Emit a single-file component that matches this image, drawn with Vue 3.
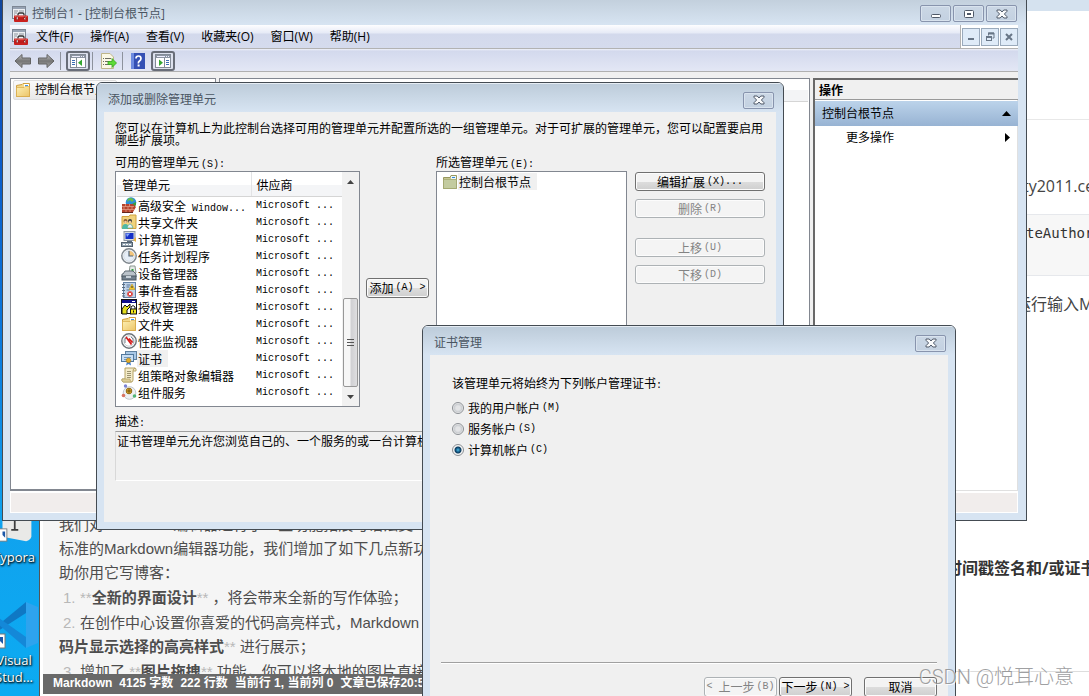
<script setup>
import { ref } from 'vue'

const menus = [
  ['文件', 'F'], ['操作', 'A'], ['查看', 'V'], ['收藏夹', 'O'], ['窗口', 'W'], ['帮助', 'H'],
]

const snapins = [
  { icon: 'firewall', name: '高级安全', latin: ' Window...' },
  { icon: 'share', name: '共享文件夹' },
  { icon: 'computer', name: '计算机管理' },
  { icon: 'clock', name: '任务计划程序' },
  { icon: 'device', name: '设备管理器' },
  { icon: 'events', name: '事件查看器' },
  { icon: 'auth', name: '授权管理器' },
  { icon: 'folder', name: '文件夹' },
  { icon: 'perf', name: '性能监视器' },
  { icon: 'cert', name: '证书', selected: true },
  { icon: 'policy', name: '组策略对象编辑器' },
  { icon: 'component', name: '组件服务' },
]

const accounts = [
  { id: 'user', label: '我的用户帐户', key: '(M)' },
  { id: 'service', label: '服务帐户', key: '(S)' },
  { id: 'computer', label: '计算机帐户', key: '(C)' },
]
const account = ref('computer')
</script>

<template>
  <div class="desktop">
    <svg class="defs" aria-hidden="true">
      <linearGradient id="gFolder" x1="0" y1="0" x2="1" y2="1">
        <stop offset="0" stop-color="#fdf0b4" /><stop offset="1" stop-color="#ecc467" />
      </linearGradient>
      <linearGradient id="gArrow" x1="0" y1="0" x2="0" y2="1">
        <stop offset="0" stop-color="#c4c4c4" /><stop offset="0.5" stop-color="#757575" /><stop offset="1" stop-color="#a8a8a8" />
      </linearGradient>
      <symbol id="mmc" viewBox="0 0 16 16">
        <rect x="0.500" y="0.500" width="13" height="12" fill="#eceff3" stroke="#7d8794" />
        <rect x="1" y="1" width="12" height="2" fill="#97a3b3" />
        <path d="M2 5h4M2 7h3M2 9h1M7 5h5" stroke="#8d949d" />
        <path d="M6 9.500V8.500Q6 7 7.500 7h3Q12 7 12 8.500V9.500" fill="none" stroke="#333" stroke-width="1.300" />
        <rect x="2" y="9.500" width="14" height="6.500" rx="1" fill="#c9211e" />
        <path d="M3 10.500h12" stroke="#e0524a" />
        <path d="M2 13h14" stroke="#a31412" stroke-width="0.6" />
        <rect x="4.500" y="11" width="1.500" height="2.500" fill="#efefef" stroke="#6f1010" stroke-width="0.4" />
        <rect x="12" y="11" width="1.500" height="2.500" fill="#efefef" stroke="#6f1010" stroke-width="0.4" />
      </symbol>
      <symbol id="folder" viewBox="0 0 16 16">
        <path d="M1.500 3.500L7 2.500L8 1.500H14.500V14.500H1.500Z" fill="#f3d98b" stroke="#cf9f3f" />
        <rect x="9" y="2" width="5" height="3" fill="#fff" />
        <path d="M10 3.500h3" stroke="#3d96e8" />
        <path d="M1.500 5.500H9L10 4.500H14.500V14.500H1.500Z" fill="url(#gFolder)" stroke="#d9aa49" stroke-width="0.7" />
      </symbol>
      <symbol id="folder-green" viewBox="0 0 16 16">
        <path d="M1.500 3.500H8L9 1.500H14.500V14.500H1.500Z" fill="#c6c792" stroke="#97975f" />
        <rect x="9" y="2" width="5" height="3" fill="#edf4f4" />
        <path d="M10 3.500h3" stroke="#2e8bd8" />
        <path d="M1.500 5.500H14.500V14.500H1.500Z" fill="#c3cba0" stroke="#a1a66f" stroke-width="0.7" />
      </symbol>
      <symbol id="firewall" viewBox="0 0 16 16">
        <circle cx="10" cy="5.500" r="5.300" fill="#2f8fd6" />
        <path d="M7 1.500Q11 0 13 3L11 5L9 3L6 5Z" fill="#69bf4a" />
        <path d="M11 7l4-2v3l-2 2z" fill="#3c9d3a" />
        <path d="M1 7H12L15 10L12 15H1Z" fill="#b5442d" />
        <path d="M1 9.500H13M1 12.500H13M4.500 7v2.500M8.500 7v2.500M3 9.500v3M7 9.500v3M11 9.500v3M5 12.500V15M9 12.500V15" stroke="#e7a48e" stroke-width="0.7" />
        <path d="M1 15.500H12" stroke="#66261b" />
      </symbol>
      <symbol id="share" viewBox="0 0 16 16">
        <path d="M1 2.500H8L9 1H15V14.500H1Z" fill="#f0d27c" stroke="#d1a33e" />
        <circle cx="4.500" cy="7" r="2" fill="#8a5a2e" /><circle cx="9" cy="7" r="2" fill="#3b3b3b" />
        <circle cx="4.500" cy="8" r="1.300" fill="#f0c8a0" /><circle cx="9" cy="8" r="1.300" fill="#f0c8a0" />
        <path d="M1 15Q1 10 4.500 10T7 15Z" fill="#4fb8a5" /><path d="M6 14Q7 10 9 10T12 14Z" fill="#e8f3f7" stroke="#3b9b8a" stroke-width="0.6" />
      </symbol>
      <symbol id="computer" viewBox="0 0 16 16">
        <rect x="3" y="0.500" width="11" height="9" fill="#d7dde2" stroke="#8e98a4" />
        <rect x="4.500" y="2" width="8" height="6" fill="#1531c8" />
        <path d="M5 2.500L9 2.500L6 6Z" fill="#87a7f5" />
        <path d="M12 9L15 6v5Z" fill="#e8b449" />
        <path d="M6 10h5v2H6Z" fill="#5d6f80" />
        <rect x="0.500" y="11.500" width="11" height="4" fill="#94a4b2" stroke="#53616e" />
        <path d="M2 13.500h2M5 13.500h2M8 13.500h2" stroke="#fff" />
      </symbol>
      <symbol id="clock" viewBox="0 0 16 16">
        <circle cx="8" cy="8" r="7.200" fill="#f3f6f8" stroke="#7d858c" stroke-width="1.400" />
        <circle cx="8" cy="8" r="5.300" fill="#e6eef7" stroke="#c2ccd6" stroke-width="0.6" />
        <path d="M8 8V2.700A5.300 5.300 0 0 1 13.300 8Z" fill="#f2c57b" />
        <path d="M8 3v5h4" fill="none" stroke="#52667b" stroke-width="1.200" />
      </symbol>
      <symbol id="device" viewBox="0 0 16 16">
        <path d="M9 1h5l1 7H8Z" fill="#e4eae6" stroke="#8b9690" />
        <path d="M10.500 4h2v3h-2z" fill="#37a345" />
        <path d="M2 9L4 6H12L15 9V12H1V9Z" fill="#bbc3ca" stroke="#5f6a74" />
        <rect x="1" y="11" width="14" height="4" fill="#72808d" stroke="#4d5862" />
        <rect x="5" y="11" width="5" height="2" fill="#c8d1d9" />
      </symbol>
      <symbol id="events" viewBox="0 0 16 16">
        <rect x="2.500" y="0.500" width="12" height="15" fill="#c2d4e8" stroke="#6583a6" />
        <path d="M1 2.500h3M1 5.500h3M1 8.500h3M1 11.500h3M1 14h3" stroke="#5c6c7d" />
        <path d="M5.500 3h4M5.500 5h3M5.500 8h3" stroke="#54749c" />
        <path d="M11 2l3 5.500H8Z" fill="#f5c927" stroke="#b28b16" stroke-width="0.5" />
        <path d="M11 4v2" stroke="#333" />
        <circle cx="9" cy="12" r="2.800" fill="#dd403b" /><path d="M7.800 10.800l2.400 2.400M10.200 10.800l-2.400 2.400" stroke="#fff" />
      </symbol>
      <symbol id="auth" viewBox="0 0 16 16">
        <rect x="0.500" y="0.500" width="15" height="14" fill="#fff" stroke="#111" />
        <rect x="1" y="1" width="14" height="3" fill="#10108c" />
        <path d="M11 2.500h3" stroke="#fff" />
        <path d="M1 15V10L4 6L6 8L9 5V8L6 11V15Z" fill="#e2dd1d" stroke="#111" />
        <path d="M10 10V8q2-3 4 0v2" fill="none" stroke="#111" />
        <rect x="9.500" y="10" width="6" height="5" fill="#f2e81e" stroke="#111" />
        <path d="M12.500 11.500v2" stroke="#111" />
      </symbol>
      <symbol id="perf" viewBox="0 0 16 16">
        <circle cx="8" cy="8" r="7.200" fill="#fff" stroke="#6c7379" stroke-width="1.400" />
        <circle cx="8" cy="8" r="5.200" fill="none" stroke="#c5cacf" />
        <path d="M4 10V6l2-2M10 4l2 2v4" stroke="#79838d" fill="none" />
        <path d="M5 4L10.500 11.500M8 5.500L11.500 9.500" stroke="#d61e1e" stroke-width="1.700" />
      </symbol>
      <symbol id="cert" viewBox="0 0 16 16">
        <rect x="4.500" y="1.500" width="11" height="8" fill="#a9c8e6" stroke="#60819f" />
        <rect x="0.500" y="4.500" width="12" height="7" fill="#c9def3" stroke="#52799e" />
        <path d="M3 7.500h7M3 9.500h3" stroke="#6f97bc" />
        <path d="M6.500 10L5 15.500l2.500-1.500L10 15.500L9 10Z" fill="#3e7ed1" />
        <circle cx="7.500" cy="10.500" r="2.300" fill="#e3ad29" stroke="#a67714" stroke-width="0.6" />
      </symbol>
      <symbol id="policy" viewBox="0 0 16 16">
        <path d="M4 1H14Q15.500 1 15 4H12V13Q12 15 10 15H2Q0.500 14 1 12H4Z" fill="#f3ebc9" stroke="#b6a366" />
        <path d="M12 4Q12 1.500 14 1" fill="none" stroke="#b6a366" />
        <path d="M6 4.500h4M6 6.500h4M6 8.500h4M6 10.500h4" stroke="#9c9370" />
        <path d="M1 12H9Q9 14.500 10.500 15H2Q0.500 14 1 12Z" fill="#dccd97" stroke="#b6a366" stroke-width="0.7" />
      </symbol>
      <symbol id="component" viewBox="0 0 16 16">
        <circle cx="8.500" cy="9" r="6.300" fill="#eef0f2" stroke="#c2c7cc" />
        <circle cx="8" cy="7" r="2.800" fill="#efb92e" stroke="#8c6514" />
        <path d="M8 5v4M6 7h4" stroke="#6b4b0e" />
        <circle cx="4.500" cy="2" r="1.700" fill="#7b83d5" /><circle cx="2.500" cy="11.500" r="1.800" fill="#d97362" />
        <circle cx="13.500" cy="12" r="1.800" fill="#52b576" />
      </symbol>
      <symbol id="close" viewBox="0 0 12 10">
        <path d="M1 1H4.200L6 3L7.800 1H11V2.300L8.400 5L11 7.700V9H7.800L6 7L4.200 9H1V7.700L3.600 5L1 2.300Z" fill="#fafbfc" stroke="#4f5968" />
      </symbol>
    </svg>

    <!-- web page on the right -->
    <section class="article">
      <p class="a1">ty2011.cer</p>
      <pre class="acode">teAuthority</pre>
      <p class="a3">运行输入MMC</p>
      <h4 class="a4">时间戳签名和/或证书</h4>
    </section>

    <!-- desktop shortcuts -->
    <aside class="icons">
      <svg class="typora" viewBox="0 0 40 32">
        <path d="M0 0H33V18Q32 22 27 23L0 18Z" fill="#e9e9e7" />
        <path d="M10 10h8M14 0v10" stroke="#3d3d3d" stroke-width="2" />
        <rect x="-8" y="9" width="13" height="14" fill="#fff" stroke="#777" />
        <path d="M0 12h3v7L0 16z" fill="#1c58a8" />
      </svg>
      <span class="cap">Typora</span>
      <svg class="code" viewBox="0 0 40 52">
        <path d="M26 3L38 8V44L26 49Z" fill="#2ea3ee" />
        <path d="M26 3L-8 31V36L26 14Z" fill="#0f78c4" />
        <path d="M26 49L-8 20V14L26 38Z" fill="#1488d8" />
        <rect x="-8" y="35" width="13" height="14" fill="#fff" stroke="#777" />
        <path d="M0 38h3v7L0 42z" fill="#1c58a8" />
      </svg>
      <span class="cap">Visual</span>
      <span class="cap">Stud...</span>
    </aside>

    <!-- markdown editor behind the console -->
    <section class="editor">
      <div class="prose">
        <p>我们对Markdown编辑器进行了一些功能拓展与语法支<br>标准的Markdown编辑器功能，我们增加了如下几点新功<br>助你用它写博客：</p>
        <p><i class="num">1.</i><i>**</i><b>全新的界面设计</b><i>**</i> ，将会带来全新的写作体验；</p>
        <p><i class="num">2.</i>在创作中心设置你喜爱的代码高亮样式，Markdown<br><b>码片显示选择的高亮样式</b><i>**</i> 进行展示；</p>
        <p><i class="num">3.</i>增加了 <i>**</i><b>图片拖拽</b><i>**</i> 功能，你可以将本地的图片直接</p>
      </div>
      <footer class="edbar"><span>Markdown</span><span>4125 字数</span><span>222 行数</span><span>当前行 1, 当前列 0</span><span>文章已保存20:5</span></footer>
    </section>

    <!-- console window -->
    <main class="win console">
      <header class="ctitle">
        <svg class="i16"><use href="#mmc" /></svg>
        <h1>控制台1 - [控制台根节点]</h1>
        <div class="cbtns">
          <button class="cb" aria-label="最小化"><svg width="12" height="10" viewBox="0 0 12 10"><rect x="1.500" y="5.500" width="9" height="3" rx="1" fill="#fff" stroke="#4f5968" /></svg></button>
          <button class="cb" aria-label="最大化"><svg width="12" height="10" viewBox="0 0 12 10"><rect x="1.500" y="1.500" width="9" height="7" rx="1" fill="#fff" stroke="#4f5968" /><rect x="4.500" y="4.500" width="3" height="1" fill="#fff" stroke="#4f5968" /></svg></button>
          <button class="cb" aria-label="关闭"><svg width="12" height="10"><use href="#close" /></svg></button>
        </div>
      </header>
      <nav class="menubar">
        <div class="menus">
          <svg class="i16"><use href="#mmc" /></svg>
          <button v-for="m in menus" :key="m[1]" class="menu">{{ m[0] }}({{ m[1] }})</button>
        </div>
        <div class="mdi">
          <button aria-label="最小化子窗口"><svg width="10" height="10"><path d="M2 7h6" stroke="#687687" stroke-width="2" /></svg></button>
          <button aria-label="还原子窗口"><svg width="10" height="10"><path d="M3.500 3.500V1H9V6H7.500" fill="none" stroke="#687687" /><path d="M3 1.500H9" stroke="#687687" stroke-width="2" /><rect x="1.500" y="4.500" width="5" height="4" fill="none" stroke="#687687" /><path d="M1 5h6" stroke="#687687" stroke-width="2" /></svg></button>
          <button aria-label="关闭子窗口"><svg width="10" height="10"><path d="M2 2L8 8M8 2L2 8" stroke="#687687" stroke-width="2" /></svg></button>
        </div>
      </nav>
      <div class="toolbar">
        <button class="tb" aria-label="后退"><svg width="18" height="16" viewBox="0 0 18 16"><path d="M1 8L8 1.500V5H16.500V11H8V14.500Z" fill="url(#gArrow)" stroke="#626262" /></svg></button>
        <button class="tb fwd" aria-label="前进"><svg width="18" height="16" viewBox="0 0 18 16"><path d="M17 8L10 1.500V5H1.500V11H10V14.500Z" fill="url(#gArrow)" stroke="#626262" /></svg></button>
        <span class="sep"></span>
        <button class="tb on" aria-label="显示/隐藏控制台树">
          <svg width="16" height="14" viewBox="0 0 16 14"><rect x="0.500" y="0.500" width="15" height="13" fill="#fff" stroke="#838b97" /><rect x="1" y="1" width="14" height="3" fill="#8c95a2" /><path d="M2 2.500h8M11 2.500h1M13 2.500h1" stroke="#eef" /><path d="M2 6.500h3M2 8.500h3M2 10.500h3" stroke="#3c6eb5" /><path d="M6.500 4v9" stroke="#838b97" /><path d="M12 5.500V12L8 8.800Z" fill="#35a832" /></svg>
        </button>
        <span class="sep s2"></span>
        <button class="tb exp" aria-label="导出列表">
          <svg width="16" height="16" viewBox="0 0 16 16"><path d="M0.500 0.500H9L12.500 4V15.500H0.500Z" fill="#fbf8e6" stroke="#bfb68b" /><path d="M2 5.500h1M4 5.500h6M2 8.500h1M4 8.500h5M2 11.500h1M4 11.500h5" stroke="#6d6d62" /><path d="M7 8.500h4V5.500L15.500 10L11 14.500V11.500H7Z" fill="#5edb37" stroke="#36a220" stroke-width="0.8" /></svg>
        </button>
        <span class="sep"></span>
        <button class="tb help" aria-label="帮助"><svg width="14" height="16" viewBox="0 0 14 16"><rect width="14" height="16" fill="#3450b4" /><rect width="3" height="16" fill="#6d8be0" /><path d="M5 5.500Q5 3 7.500 3T10 5.500Q10 7 8.500 8T7.500 10.500" fill="none" stroke="#fff" stroke-width="1.700" /><rect x="6.600" y="11.500" width="2" height="2" fill="#fff" /></svg></button>
        <button class="tb on" aria-label="显示/隐藏操作窗格">
          <svg width="16" height="14" viewBox="0 0 16 14"><rect x="0.500" y="0.500" width="15" height="13" fill="#fff" stroke="#838b97" /><rect x="1" y="1" width="14" height="3" fill="#8c95a2" /><path d="M2 2.500h8M11 2.500h1M13 2.500h1" stroke="#eef" /><path d="M11 6.500h3M11 8.500h3M11 10.500h3" stroke="#3c6eb5" /><path d="M9.500 4v9" stroke="#838b97" /><path d="M4 5.500V12L8 8.800Z" fill="#35a832" /></svg>
        </button>
      </div>
      <div class="panes">
        <section class="pane tree"><div class="node"><svg class="i16"><use href="#folder" /></svg>控制台根节点</div></section>
        <section class="pane mid"><div class="midhead"></div></section>
        <section class="actions">
          <h2>操作</h2>
          <button class="acthead">控制台根节点<svg width="9" height="5"><path d="M0 5L4.500 0L9 5Z" /></svg></button>
          <button class="actrow">更多操作<svg width="5" height="9"><path d="M0 0L5 4.500L0 9Z" /></svg></button>
        </section>
      </div>
      <footer class="cstatus"></footer>
    </main>

    <!-- snap-in dialog -->
    <section class="win dialog addrem">
      <header class="dtitle"><h2>添加或删除管理单元</h2><button class="cb" aria-label="关闭"><svg width="12" height="10"><use href="#close" /></svg></button></header>
      <div class="dbody sim">
        <p class="intro">您可以在计算机上为此控制台选择可用的管理单元并配置所选的一组管理单元。对于可扩展的管理单元，您可以配置要启用<br>哪些扩展项。</p>
        <div class="cols">
          <div class="avail">
            <h3>可用的管理单元<span class="en">(S):</span></h3>
            <div class="list">
              <table>
                <thead><tr><th class="c1">管理单元</th><th>供应商</th></tr></thead>
                <tbody>
                  <tr v-for="s in snapins" :key="s.icon">
                    <td><div class="cell"><svg class="i16"><use :href="'#' + s.icon" /></svg><span :class="['nm', { sel: s.selected }]">{{ s.name }}<span v-if="s.latin" class="en pre">{{ s.latin }}</span></span></div></td>
                    <td><span class="en vendor">Microsoft ...</span></td>
                  </tr>
                </tbody>
              </table>
              <div class="scroll">
                <svg width="7" height="4"><path d="M0 4L3.500 0L7 4Z" fill="#444" /></svg>
                <div class="thumb"><i></i><i></i><i></i></div>
                <svg width="7" height="4"><path d="M0 0L3.500 4L7 0Z" fill="#444" /></svg>
              </div>
            </div>
          </div>
          <div class="addcol"><button class="btn add">添加<span class="en">(A) &gt;</span></button></div>
          <div class="chosen">
            <h3>所选管理单元<span class="en">(E):</span></h3>
            <div class="list tall"><div class="root"><svg class="i16"><use href="#folder-green" /></svg><span class="nm sel">控制台根节点</span></div></div>
          </div>
          <div class="side">
            <button class="btn">编辑扩展<span class="en">(X)...</span></button>
            <button class="btn" disabled>删除<span class="en">(R)</span></button>
            <button class="btn gap" disabled>上移<span class="en">(U)</span></button>
            <button class="btn" disabled>下移<span class="en">(D)</span></button>
          </div>
        </div>
        <h3 class="dl">描述<span class="en colon">:</span></h3>
        <div class="desc">证书管理单元允许您浏览自己的、一个服务的或一台计算机</div>
      </div>
    </section>

    <!-- certificate wizard -->
    <section class="win dialog cert">
      <header class="dtitle"><h2>证书管理</h2><button class="cb" aria-label="关闭"><svg width="12" height="10"><use href="#close" /></svg></button></header>
      <div class="dbody wiz sim">
        <fieldset>
          <legend>该管理单元将始终为下列帐户管理证书<span class="en colon">:</span></legend>
          <label v-for="a in accounts" :key="a.id"><input v-model="account" type="radio" name="account" :value="a.id">{{ a.label }}<span class="en">{{ a.key }}</span></label>
        </fieldset>
        <footer>
          <button class="btn" disabled><span class="en pre">&lt; </span>上一步<span class="en">(B)</span></button>
          <button class="btn">下一步<span class="en">(N) &gt;</span></button>
          <button class="btn cancel">取消</button>
        </footer>
      </div>
    </section>

    <div class="mark">CSDN @悦耳心意</div>
  </div>
</template>

<style>
body { margin: 0; background: #fff; }
</style>

<style scoped>
.desktop { position: relative; height: 100vh; overflow: hidden; background: #fff; font: 12px/16px "Open Sans", "Noto Sans CJK SC", sans-serif; color: #000; }
.desktop * { box-sizing: border-box; }
.defs { position: absolute; width: 0; height: 0; }
h1, h2, h3, h4, p, pre { margin: 0; font-size: inherit; font-weight: normal; }
button { font: inherit; color: inherit; margin: 0; padding: 0; border: 0; background: none; }
i { font-style: normal; }
.i16 { width: 16px; height: 16px; flex: none; }
svg { display: block; flex: none; }

.article { position: absolute; top: 0; right: 0; bottom: 0; left: 900px; border-top: 11px solid #d5e2ef; color: #444; font-size: 16px; line-height: 24px; white-space: nowrap; overflow: hidden; padding-top: 108px; }
.a1 { border-top: 1px solid #e8e8e8; padding: 54px 0 0 123px; height: 95px; }
.acode { background: #f7f7f7; border: 1px solid #e6e8ec; border-width: 1px 0; height: 62px; padding: 6px 0 0 126px; font: 14px/24px "DejaVu Sans Mono", monospace; color: #333; }
.a3 { padding: 16px 0 0 115px; height: 264px; }
.a4 { padding: 16px 0 0 46px; height: 132px; font-weight: bold; color: #333; border-bottom: 1px solid #ddd; }

.icons { position: absolute; left: 0; top: 0; bottom: 0; width: 40px; padding-top: 521px; background: linear-gradient(#10469b 0, #0b57c6 130px, #0b78dd 330px, #10a2ee 520px, #0cabf2 100%); color: #fff; font-size: 13px; line-height: 17px; overflow: hidden; display: flex; flex-direction: column; }
.typora { width: 40px; height: 28px; }
.cap { width: 28px; display: flex; justify-content: center; text-shadow: 1px 1px 2px #000, 0 1px 2px #023; }
.code { width: 40px; height: 52px; margin: 33px 0 1px; }

.editor { position: absolute; left: 39px; top: 513px; bottom: 0; width: 400px; display: flex; flex-direction: column; border-left: 1px solid #555; padding: 0 0 2px 3px; background: #fff; }
.prose { flex: 1; min-height: 0; overflow: hidden; background: #f5f5f5; padding-left: 16px; font: 15px/24px "Liberation Sans", "Noto Sans CJK SC", sans-serif; color: #4d4d4d; white-space: nowrap; }
.prose p { margin-bottom: 1px; }
.prose i { color: #b8b8b8; }
.prose .num { display: inline-block; width: 17px; margin-left: 4px; }
.edbar { height: 20px; flex: none; background: #696969; color: #fff; font: bold 12px/18px "Liberation Sans", "Noto Sans CJK SC", sans-serif; display: flex; gap: 7px; padding-left: 10px; white-space: nowrap; overflow: hidden; }

.win { position: absolute; display: flex; flex-direction: column; border: 1px solid #444b52; background: #d7e4f2; padding: 0 7px 7px; }
.console { left: 2px; right: 62px; top: 0; height: 521px; border-top: 0; padding-right: 8px; }
.ctitle { height: 25px; flex: none; display: flex; align-items: center; gap: 4px; margin: 0 -8px 0 -7px; padding: 2px 9px 0; background: linear-gradient(#c3d0dd, #d7e4f2); color: #4a5562; }
.ctitle h1 { flex: 1; }
.cbtns { display: flex; gap: 2px; }
.cb { width: 31px; height: 17px; flex: none; display: flex; align-items: center; justify-content: center; border: 1px solid #8894ad; border-radius: 2px; background: linear-gradient(#cbd7e5, #c3d1e1); box-shadow: inset 0 0 0 1px #d9e3ee; }
.menubar { height: 24px; flex: none; display: flex; background: #fff; }
.menus { flex: 1; display: flex; align-items: center; gap: 17px; padding-left: 2px; background: linear-gradient(#fdfdff, #e6eaf6 8px, #d3d9ec 9px, #d5dbed); border: solid #b2b2b2; border-width: 0 1px 1px 0; }
.menus .i16 { margin-right: -9px; }
.menu { white-space: nowrap; }
.mdi { display: flex; gap: 1px; align-items: center; padding-left: 1px; border-bottom: 1px solid #b2b2b2; }
.mdi button { width: 18px; height: 18px; display: flex; align-items: center; justify-content: center; border: 1px solid #9aaabc; background: #dfebf8; }
.toolbar { height: 23px; flex: none; display: flex; align-items: center; padding: 2px 0 0 4px; background: linear-gradient(#f0f2fa, #d3d9ed 2px, #e3e7f5); border-bottom: 1px solid #b0b0b0; }
.tb { display: flex; align-items: center; justify-content: center; }
.fwd { margin-left: 5px; }
.sep { width: 1px; height: 18px; background: #8d929c; margin: 0 5px; }
.sep.s2 { margin: 0 8px 0 2px; }
.on { width: 24px; height: 20px; border: 2px solid #686d78; border-radius: 3px; background: #dde1ee; }
.help { margin: 0 6px 0 3px; }
.panes { flex: 1; display: flex; gap: 3px; min-height: 0; padding-top: 6px; background: #f0f0f0; }
.pane { background: #fff; border: 1px solid #828790; border-bottom-width: 2px; }
.tree { width: 206px; flex: none; padding: 1px 2px; }
.node { display: flex; align-items: center; gap: 4px; width: 104px; height: 20px; padding-left: 1px; border: 1px solid #dedede; border-radius: 2px; background: linear-gradient(#fafafa, #e8e8e8); white-space: nowrap; }
.mid { flex: 1; padding: 1px; }
.midhead { height: 22px; border-bottom: 1px solid #d5d5d5; background: linear-gradient(#fff 50%, #f3f4f6 50%); }
.actions { width: 205px; flex: none; background: #fff; border: solid #696969; border-width: 2px 0 0 2px; box-shadow: inset -1px -1px #e0e0e0; }
.actions h2 { height: 20px; padding-left: 4px; line-height: 21px; font-weight: bold; background: #f0f0f0; border-bottom: 1px solid #999; }
.acthead, .actrow { display: flex; align-items: center; justify-content: space-between; width: 100%; height: 25px; padding: 0 7px; }
.acthead { margin-top: 1px; background: linear-gradient(#bcd3ea, #97b3d3); }
.actrow { padding: 0 8px 0 31px; height: 23px; }
.cstatus { height: 22px; flex: none; background: #f1edec; border: solid #fff; border-width: 2px 1px 1px; }

.dialog { border-radius: 6px 6px 0 0; overflow: hidden; }
.addrem { left: 96px; top: 82px; width: 688px; height: 448px; }
.cert { left: 422px; top: 325px; width: 534px; height: 386px; }
.dtitle { height: 29px; flex: none; display: flex; align-items: center; justify-content: space-between; margin: 0 -7px; padding: 5px 9px 0 11px; background: linear-gradient(#bccbd9, #d7e4f2); color: #4a5562; box-shadow: inset 0 1px #e6edf4; }
.dbody { flex: 1; background: #f0f0f0; padding: 10px 11px 0; min-height: 0; }
.sim { font: 12px/16px "Noto Sans CJK SC", sans-serif; }
.en { font: 10px/12px "Liberation Mono", monospace; margin-left: 2px; }
.pre { white-space: pre; margin-left: 0; }
.colon { margin-left: 0; }
.intro { line-height: 12px; white-space: nowrap; }
.cols { display: grid; grid-template-columns: 245px 1fr 191px 138px; margin-top: 8px; height: 253px; }
.cols h3 { height: 17px; white-space: nowrap; }
.side { padding: 18px 0 0 8px; display: flex; flex-direction: column; gap: 8px; }
.list { display: flex; height: 236px; border: 1px solid #828790; background: #fff; }
.list table { flex: 1; border-collapse: collapse; table-layout: fixed; align-self: flex-start; margin-left: 1px; }
th { height: 24px; padding: 2px 0 0 5px; text-align: left; font-weight: normal; background: linear-gradient(#fff 55%, #f4f5f7 55%); border-bottom: 1px solid #d5d5d5; }
th.c1 { width: 134px; border-right: 1px solid #e2e3e5; }
td { height: 17px; padding: 0 0 0 5px; line-height: 17px; white-space: nowrap; }
.vendor { display: block; line-height: 17px; margin-left: 0; }
.cell { display: flex; align-items: center; height: 17px; margin-left: -1px; }
.nm { height: 17px; line-height: 17px; padding: 0 1px; }
.sel { background: #f0f0f0; padding-right: 6px; }
.scroll { width: 17px; display: flex; flex-direction: column; align-items: center; padding: 8px 1px 7px; background: #f1f1f1; }
.thumb { width: 15px; height: 89px; margin: auto 0 8px; display: flex; flex-direction: column; gap: 1px; align-items: center; justify-content: center; border: 1px solid #979797; border-radius: 2px; background: linear-gradient(90deg, #f6f6f6 45%, #d0d0d3 55%, #dedee0); }
.thumb i { width: 7px; height: 2px; border-top: 1px solid #555; }
.addcol { padding: 124px 0 0 6px; }
.tall { padding: 1px 0 0 5px; }
.root { display: flex; height: 17px; align-items: center; }
.btn { height: 20px; display: flex; align-items: center; justify-content: center; white-space: nowrap; border: 1px solid #707070; border-radius: 3px; background: linear-gradient(#f3f3f3 50%, #dddddd 50%, #cfcfcf); box-shadow: inset 0 0 0 1px #fcfcfc; }
.btn:disabled { color: #838383; border-color: #adb2b5; background: #f4f4f4; }
.side .btn { height: 19px; }
.side .gap { margin-top: 12px; }
.add { width: 63px; }
.dl { margin-top: 6px; height: 18px; }
.desc { height: 50px; padding: 1px 1px 0; border: 1px solid #fff; border-top-color: #a0a0a0; border-left-color: #d8d8d8; white-space: nowrap; overflow: hidden; }

.wiz { display: flex; flex-direction: column; padding: 20px 11px 6px; }
fieldset { margin: 0; padding: 0 0 0 11px; border: 0; }
legend { padding: 0; margin-bottom: 5px; }
label { display: flex; align-items: center; height: 21px; }
input { appearance: none; width: 12px; height: 12px; margin: 0 4px 0 0; border: 1px solid #8b8f94; border-radius: 50%; background: radial-gradient(#e3e4e6 0 2px, #c9ccd0 4px, #f4f4f4 5px); }
input:checked { background: radial-gradient(circle at 50% 50%, #4fc0ea 0, #155b86 2px, #0e3c5e 3px, #f4f4f4 4px); }
.wiz footer { display: flex; gap: 2px; justify-content: flex-end; margin-top: auto; padding-top: 14px; border-top: 1px solid #a0a0a0; box-shadow: inset 0 1px #fff; }
.wiz .btn { width: 73px; }
.wiz .cancel { margin-left: 10px; }
.mark { position: absolute; right: 15px; bottom: 5px; font-size: 20px; line-height: 28px; color: #8f9092; text-shadow: 1px 1px #fff; opacity: .85; white-space: nowrap; font-family: Roboto, "Noto Sans CJK SC", sans-serif; font-weight: 300; }
</style>
